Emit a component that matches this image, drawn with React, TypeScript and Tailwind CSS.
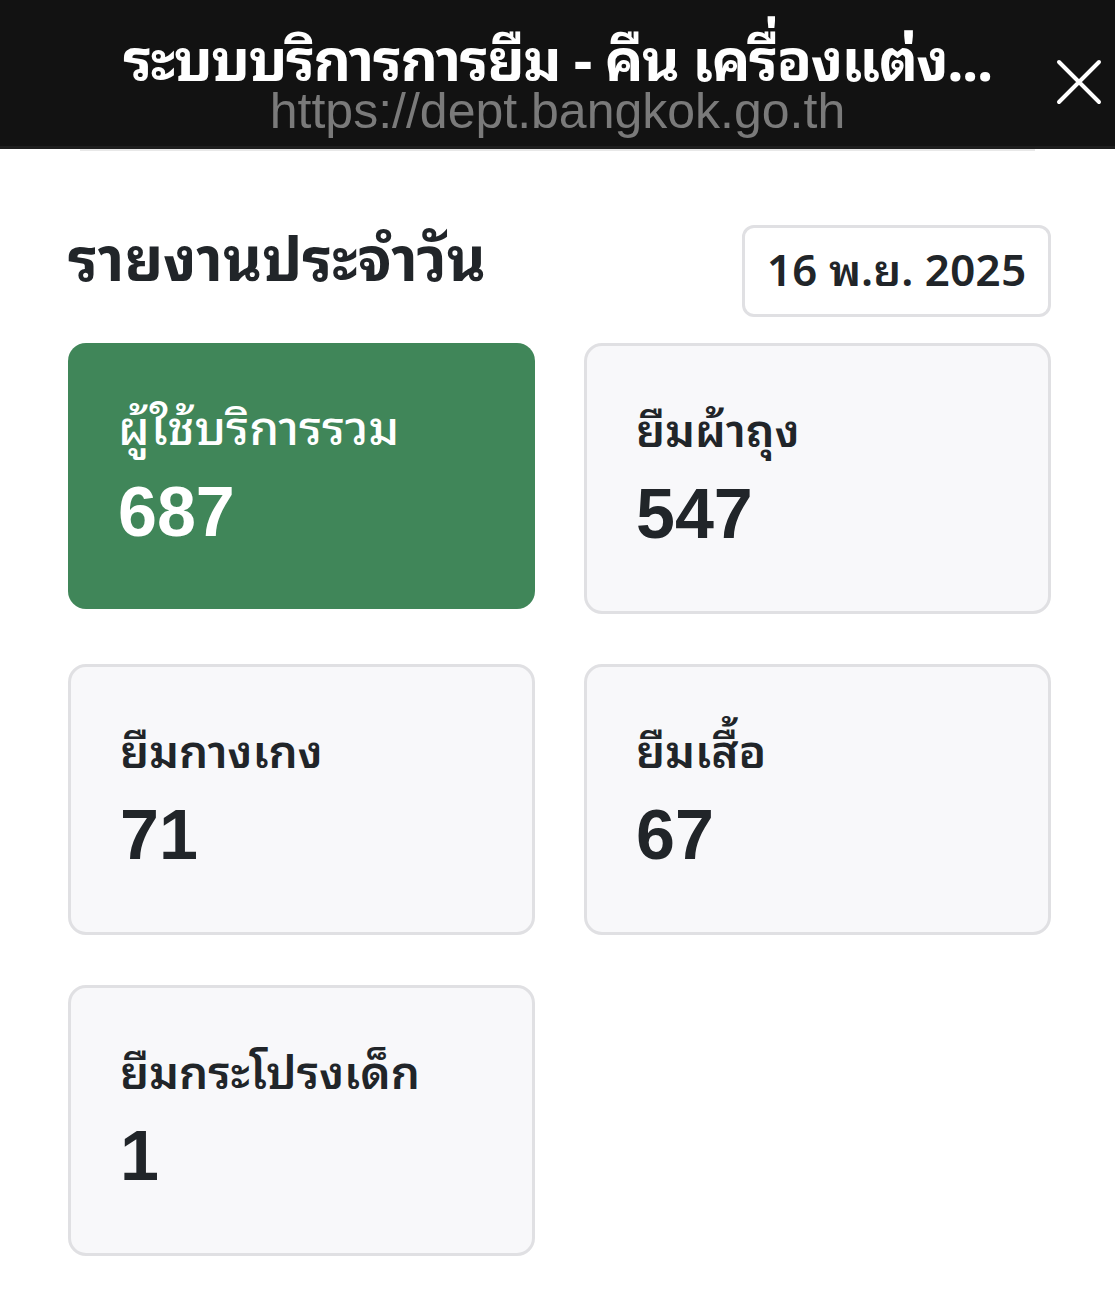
import React from 'react';

type Stat = {
  label: string;
  value: string;
  highlight?: boolean;
};

const stats: Stat[] = [
  { label: 'ผู้ใช้บริการรวม', value: '687', highlight: true },
  { label: 'ยืมผ้าถุง', value: '547' },
  { label: 'ยืมกางเกง', value: '71' },
  { label: 'ยืมเสื้อ', value: '67' },
  { label: 'ยืมกระโปรงเด็ก', value: '1' },
];

const StatCard: React.FC<{ stat: Stat }> = ({ stat }) => {
  if (stat.highlight) {
    return (
      <div className="h-[266px] rounded-[18px] bg-[#408659] px-[50px] pt-[44px] text-white">
        <div className="text-[48px] leading-[74px] font-medium">{stat.label}</div>
        <div className="mt-[7px] text-[70px] leading-[88px] font-semibold font-['Liberation_Sans',sans-serif]">{stat.value}</div>
      </div>
    );
  }
  return (
    <div className="h-[271px] rounded-[18px] border-[3px] border-[#e0e0e3] bg-[#f8f8fa] px-[49px] pt-[43px] text-[#212529]">
      <div className="text-[46px] leading-[74px] font-semibold">{stat.label}</div>
      <div className="mt-[7px] text-[70px] leading-[88px] font-bold font-['Liberation_Sans',sans-serif]">{stat.value}</div>
    </div>
  );
};

export default function App() {
  return (
    <div className="min-h-[1302px] w-[1115px] bg-white font-['Noto_Sans_Thai_Looped','Noto_Serif_Thai','Garuda','Loma','Noto_Sans_Thai','Noto_Sans',sans-serif]">
      {/* แถบหัว */}
      <div className="relative h-[149px] bg-[#121212] border-b-[3px] border-[#1e1e1e] flex flex-col items-center pt-[28px]">
        <div className="text-[58px] leading-[54px] font-bold text-white tracking-tight">
          ระบบบริการการยืม - คืน เครื่องแต่ง...
        </div>
        <div className="mt-[4px] text-[50px] leading-[50px] text-[#7a7a7a] font-['Liberation_Sans',sans-serif]">
          https://dept.bangkok.go.th
        </div>
        <button className="absolute right-[12px] top-[58px] w-[48px] h-[48px] flex items-center justify-center">
          <svg width="46" height="46" viewBox="0 0 46 46" fill="none" stroke="white" strokeWidth="4" strokeLinecap="round">
            <path d="M3 3 L43 43 M43 3 L3 43" />
          </svg>
        </button>
      </div>
      <div className="h-[2px] mx-[80px] bg-[#e8e8e8]" />

      <div className="pl-[68px] pr-[64px] pt-[74px]">
        <div className="flex items-start justify-between">
          <h1 className="text-[60px] leading-[76px] font-bold text-[#212529] mt-[-9px]">รายงานประจำวัน</h1>
          <div className="w-[309px] h-[92px] rounded-[12px] border-[3px] border-[#e0e0e3] flex items-center justify-center pb-[10px] text-[44px] font-semibold text-[#212529]">
            16 พ.ย. 2025
          </div>
        </div>

        <div className="grid grid-cols-2 gap-x-[49px] gap-y-[50px] mt-[26px]">
          {stats.map((s) => (
            <StatCard key={s.label} stat={s} />
          ))}
        </div>
      </div>
    </div>
  );
}
